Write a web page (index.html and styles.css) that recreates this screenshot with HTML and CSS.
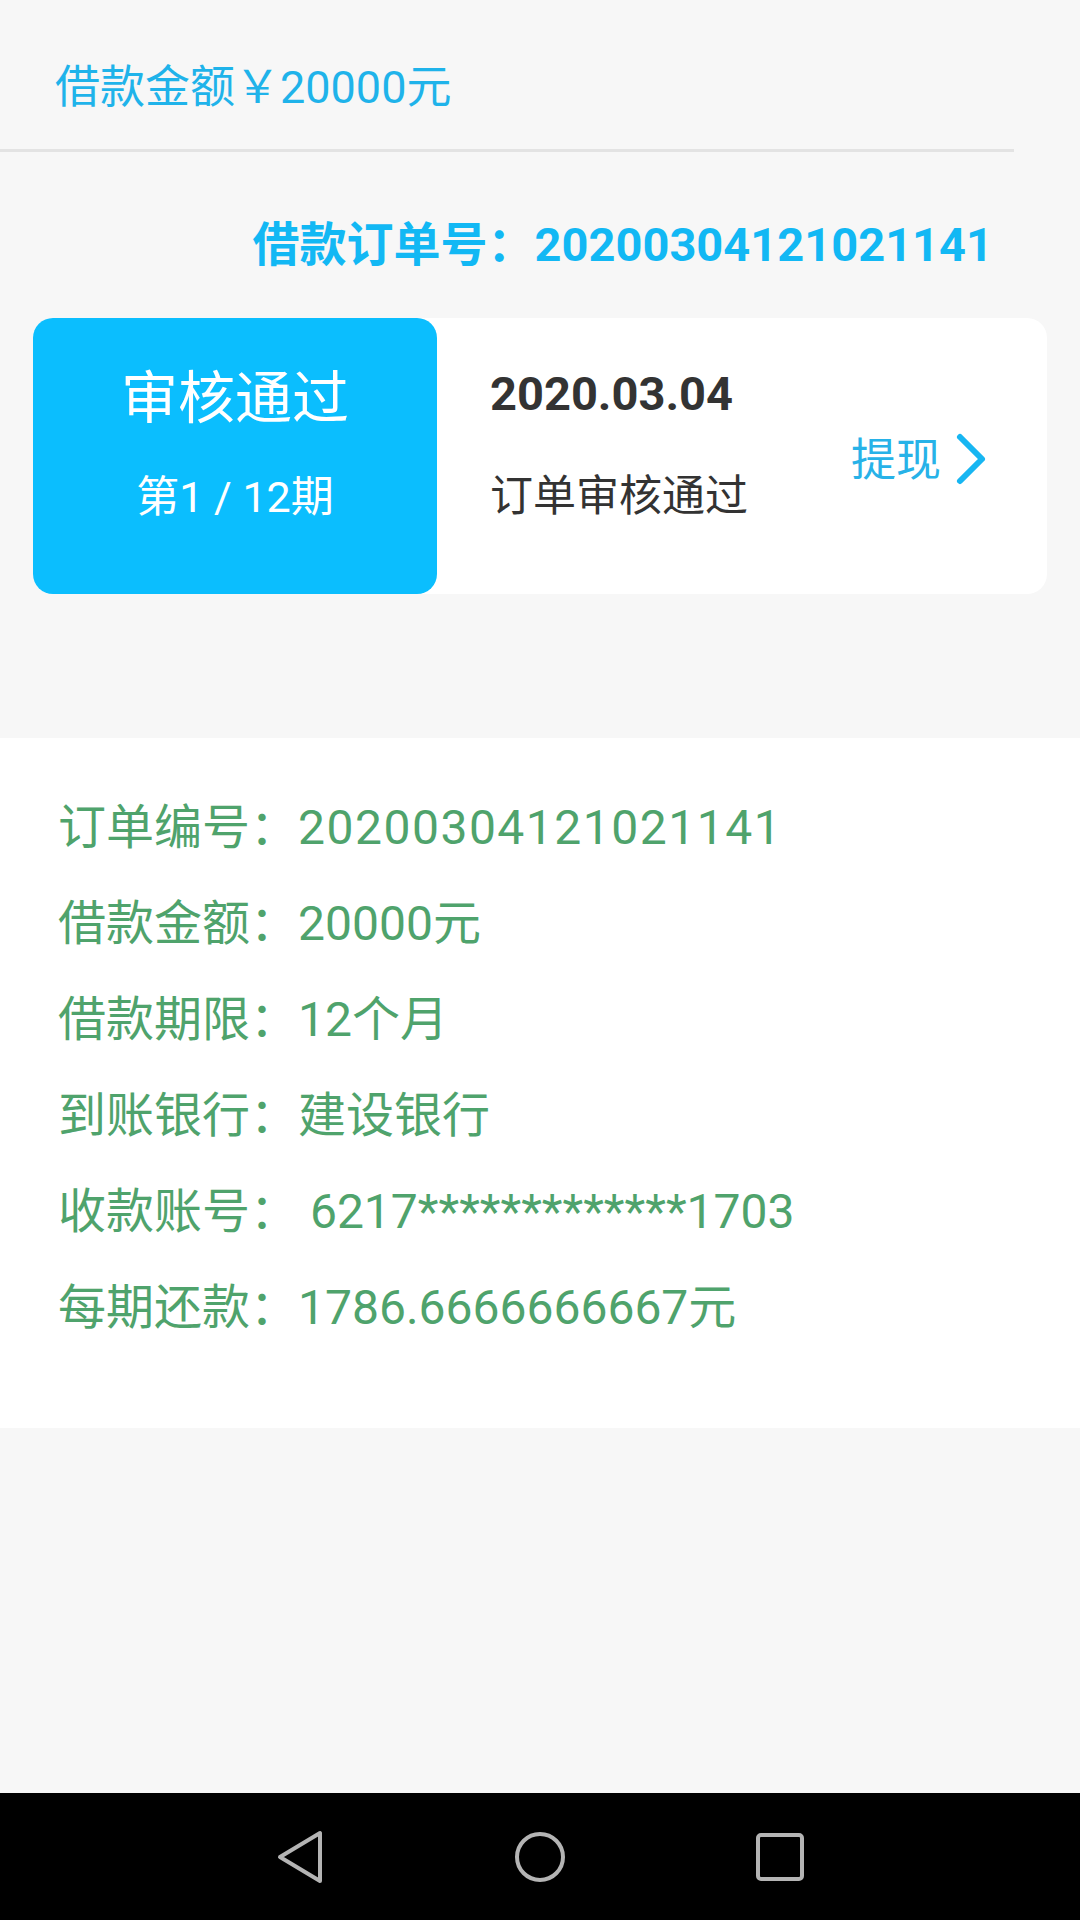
FILE: index.html
```html
<!DOCTYPE html>
<html lang="zh-CN">
<head>
    <meta charset="UTF-8">
    <meta name="viewport" content="width=device-width, initial-scale=1.0">
    <title>借款详情</title>
    <link rel="stylesheet" href="styles.css">
</head>
<body>
    <div class="page">
        <div class="loan-header">借款金额￥20000元</div>

        <div class="order-no">借款订单号：20200304121021141</div>

        <div class="status-card">
            <div class="status-badge">
                <div class="status-title">审核通过</div>
                <div class="status-period">第1 / 12期</div>
            </div>
            <div class="status-info">
                <div class="status-date">2020.03.04</div>
                <div class="status-text">订单审核通过</div>
            </div>
            <a class="withdraw" href="#">
                <span>提现</span>
                <svg class="chevron" width="32" height="54" viewBox="0 0 32 54">
                    <path d="M5 5 L27 27 L5 49" fill="none" stroke="#17b6f2" stroke-width="6" stroke-linecap="round" stroke-linejoin="round"/>
                </svg>
            </a>
        </div>

        <div class="detail">
            <div class="detail-row">订单编号：<span class="order-id">20200304121021141</span></div>
            <div class="detail-row">借款金额：20000元</div>
            <div class="detail-row">借款期限：12个月</div>
            <div class="detail-row">到账银行：建设银行</div>
            <div class="detail-row">收款账号： 6217*************1703</div>
            <div class="detail-row">每期还款：1786.6666666667元</div>
        </div>

        <div class="spacer"></div>

        <div class="nav-bar">
            <svg width="60" height="60" viewBox="0 0 60 60">
                <path d="M50 6 L50 54 L10 30 Z" fill="none" stroke="#b4b4b4" stroke-width="4" stroke-linejoin="round"/>
            </svg>
            <svg width="60" height="60" viewBox="0 0 60 60">
                <circle cx="30" cy="30" r="23" fill="none" stroke="#b4b4b4" stroke-width="4"/>
            </svg>
            <svg width="60" height="60" viewBox="0 0 60 60">
                <rect x="8" y="8" width="44" height="44" rx="3" fill="none" stroke="#b4b4b4" stroke-width="4"/>
            </svg>
        </div>
    </div>
</body>
</html>
```

FILE: styles.css
```css
body {
    margin: 0;
    padding: 0;
    background-color: #f7f7f7;
    font-family: Roboto, "Noto Sans CJK SC", sans-serif;
}

.page {
    display: flex;
    flex-direction: column;
    min-height: 100vh;
}

.loan-header {
    margin-right: 66px;
    padding: 58px 0 31px 55px;
    font-size: 45px;
    line-height: 60px;
    color: #1fb3ea;
    border-bottom: 3px solid #e3e3e3;
}

.order-no {
    margin-top: 63px;
    padding-right: 87px;
    text-align: right;
    font-size: 47px;
    font-weight: bold;
    line-height: 60px;
    color: #12b8f4;
}

.status-card {
    display: flex;
    height: 276px;
    margin: 43px 33px 0;
    background-color: #fff;
    border-radius: 20px;
}

.status-badge {
    width: 404px;
    padding-top: 48px;
    box-sizing: border-box;
    background-color: #0bbefe;
    border-radius: 20px;
    color: #fff;
    text-align: center;
}

.status-title {
    font-size: 57px;
    line-height: 66px;
}

.status-period {
    margin-top: 40px;
    font-size: 43px;
    line-height: 50px;
}

.status-info {
    padding: 46px 0 0 53px;
    color: #333;
}

.status-date {
    font-size: 47px;
    font-weight: bold;
    line-height: 60px;
}

.status-text {
    margin-top: 47px;
    font-size: 43px;
    line-height: 50px;
}

.withdraw {
    display: flex;
    align-items: center;
    gap: 14px;
    margin-left: auto;
    padding-right: 60px;
    font-size: 45px;
    color: #27b2e8;
    text-decoration: none;
}

.chevron {
    margin-top: 6px;
}

.detail {
    margin-top: 144px;
    padding: 42px 0 72px 58px;
    background-color: #fff;
}

.detail-row {
    font-size: 48px;
    line-height: 96px;
    color: #4fa36c;
}

.order-id {
    letter-spacing: 1.5px;
}

.spacer {
    flex: 1;
}

.nav-bar {
    display: flex;
    justify-content: center;
    align-items: center;
    gap: 180px;
    height: 127px;
    background-color: #000;
}
```
